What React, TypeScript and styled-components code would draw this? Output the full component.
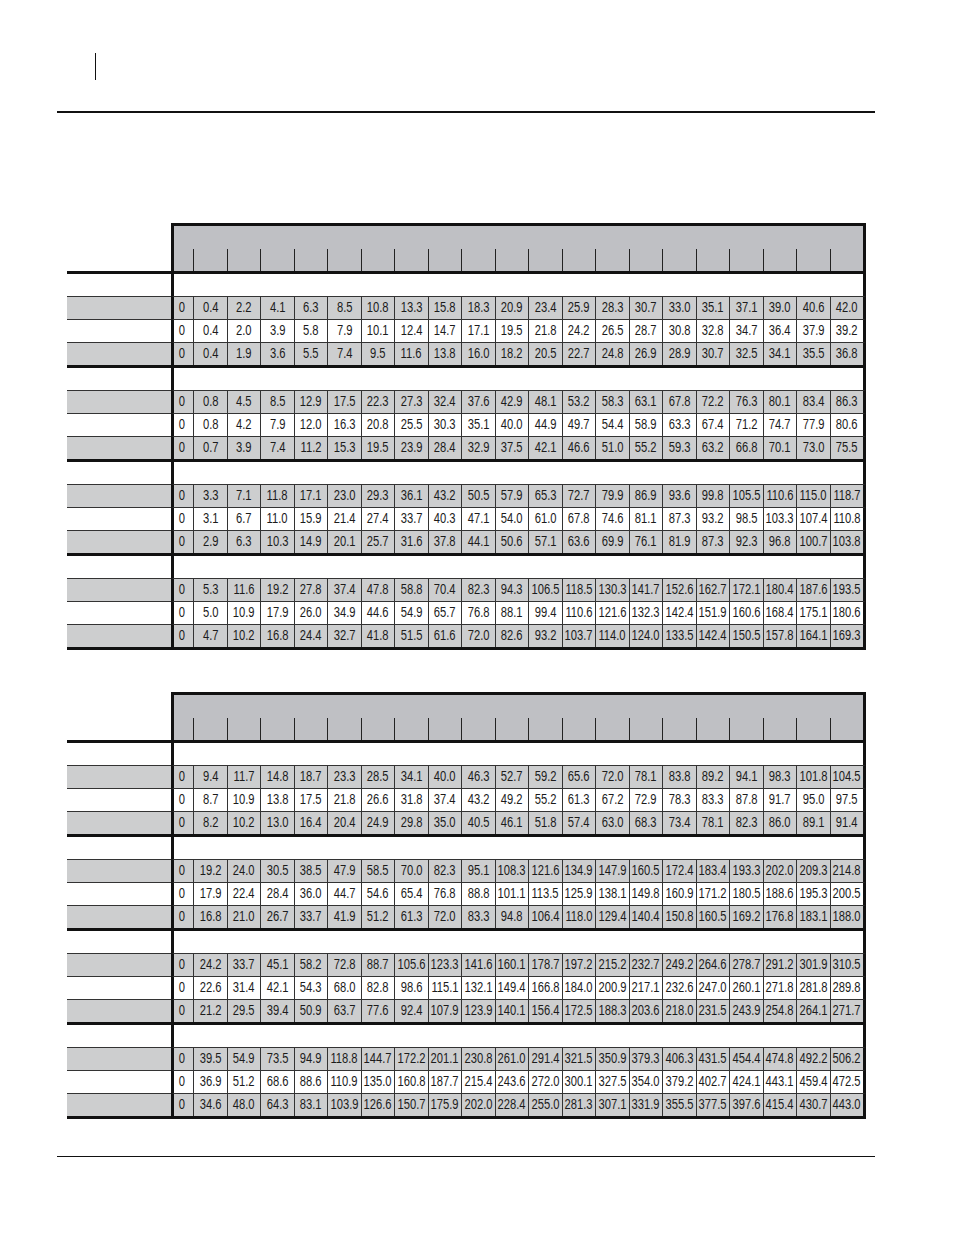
import React from "react";
import styled, { createGlobalStyle } from "styled-components";

type Tone = "gray" | "white";

const GlobalStyle = createGlobalStyle`
  html, body {
    margin: 0;
    padding: 0;
    background: #fff;
  }
  body {
    font-family: "Liberation Sans", Arial, sans-serif;
    color: #1b1b1b;
  }
`;

const Page = styled.div`
  width: 954px;
  height: 1235px;
  display: flex;
  flex-direction: column;
`;

const PageTop = styled.div`
  display: flex;
  flex-direction: column;
  padding-top: 53px;
`;

const Mark = styled.div`
  margin-left: 95px;
  width: 1px;
  height: 27px;
  background: #111;
`;

const Rule = styled.div<{ $thick?: boolean }>`
  margin-left: 57px;
  width: 818px;
  height: ${(p) => (p.$thick ? "2px" : "1px")};
  background: #111;
`;

const TopRule = styled(Rule)`
  margin-top: 31px;
`;

const BottomRule = styled(Rule)`
  margin-top: 37px;
`;

const Table = styled.div<{ $gap: number }>`
  display: flex;
  flex-direction: column;
  width: 799px;
  margin-left: 67px;
  margin-top: ${(p) => p.$gap}px;
`;

const HeadRow = styled.div`
  display: flex;
  height: 48px;
`;

const LabelGap = styled.div`
  width: 104px;
  flex: none;
`;

const HeadBox = styled.div`
  flex: 1;
  display: flex;
  flex-direction: column;
  justify-content: flex-end;
  background: #bfc0c4;
  border: 3px solid #111;
  border-bottom: none;
`;

const Ticks = styled.div`
  display: grid;
  grid-template-columns: 19px repeat(20, minmax(0, 1fr));
  height: 22px;
`;

const Tick = styled.div<{ $first?: boolean }>`
  border-left: ${(p) => (p.$first ? "none" : "1px solid #222")};
`;

const HeavyLine = styled.div`
  height: 3px;
  background: #111;
`;

const Row = styled.div<{ $blank?: boolean }>`
  display: flex;
  height: ${(p) => (p.$blank ? "22px" : "23px")};
`;

const Label = styled.div<{ $tone: Tone; $blank?: boolean }>`
  width: 104px;
  flex: none;
  box-sizing: border-box;
  background: ${(p) => (p.$tone === "gray" ? "#cdcecf" : "#fff")};
  border-top: ${(p) => (p.$blank ? "none" : "1px solid #333")};
`;

const Cells = styled.div<{ $tone: Tone; $blank?: boolean }>`
  flex: 1;
  min-width: 0;
  display: grid;
  grid-template-columns: 19px repeat(20, minmax(0, 1fr));
  box-sizing: border-box;
  background: ${(p) => (p.$tone === "gray" ? "#cdcecf" : "#fff")};
  border-left: 3px solid #111;
  border-right: 3px solid #111;
  border-top: ${(p) => (p.$blank ? "none" : "1px solid #333")};
`;

const Cell = styled.div<{ $first?: boolean }>`
  display: flex;
  align-items: center;
  justify-content: center;
  min-width: 0;
  box-sizing: border-box;
  padding-bottom: 2px;
  padding-right: ${(p) => (p.$first ? "3px" : "0")};
  border-left: ${(p) => (p.$first ? "none" : "1px solid #333")};
  font-size: 14px;
  line-height: 1;
  white-space: nowrap;
`;

const Num = styled.span`
  display: inline-block;
  transform: scaleX(0.8);
`;

const parse = (s: string) => s.trim().split(/\s+/);

const tableOne: string[][][] = [
  [
    "0 0.4 2.2 4.1 6.3 8.5 10.8 13.3 15.8 18.3 20.9 23.4 25.9 28.3 30.7 33.0 35.1 37.1 39.0 40.6 42.0",
    "0 0.4 2.0 3.9 5.8 7.9 10.1 12.4 14.7 17.1 19.5 21.8 24.2 26.5 28.7 30.8 32.8 34.7 36.4 37.9 39.2",
    "0 0.4 1.9 3.6 5.5 7.4 9.5 11.6 13.8 16.0 18.2 20.5 22.7 24.8 26.9 28.9 30.7 32.5 34.1 35.5 36.8",
  ],
  [
    "0 0.8 4.5 8.5 12.9 17.5 22.3 27.3 32.4 37.6 42.9 48.1 53.2 58.3 63.1 67.8 72.2 76.3 80.1 83.4 86.3",
    "0 0.8 4.2 7.9 12.0 16.3 20.8 25.5 30.3 35.1 40.0 44.9 49.7 54.4 58.9 63.3 67.4 71.2 74.7 77.9 80.6",
    "0 0.7 3.9 7.4 11.2 15.3 19.5 23.9 28.4 32.9 37.5 42.1 46.6 51.0 55.2 59.3 63.2 66.8 70.1 73.0 75.5",
  ],
  [
    "0 3.3 7.1 11.8 17.1 23.0 29.3 36.1 43.2 50.5 57.9 65.3 72.7 79.9 86.9 93.6 99.8 105.5 110.6 115.0 118.7",
    "0 3.1 6.7 11.0 15.9 21.4 27.4 33.7 40.3 47.1 54.0 61.0 67.8 74.6 81.1 87.3 93.2 98.5 103.3 107.4 110.8",
    "0 2.9 6.3 10.3 14.9 20.1 25.7 31.6 37.8 44.1 50.6 57.1 63.6 69.9 76.1 81.9 87.3 92.3 96.8 100.7 103.8",
  ],
  [
    "0 5.3 11.6 19.2 27.8 37.4 47.8 58.8 70.4 82.3 94.3 106.5 118.5 130.3 141.7 152.6 162.7 172.1 180.4 187.6 193.5",
    "0 5.0 10.9 17.9 26.0 34.9 44.6 54.9 65.7 76.8 88.1 99.4 110.6 121.6 132.3 142.4 151.9 160.6 168.4 175.1 180.6",
    "0 4.7 10.2 16.8 24.4 32.7 41.8 51.5 61.6 72.0 82.6 93.2 103.7 114.0 124.0 133.5 142.4 150.5 157.8 164.1 169.3",
  ],
].map((s) => s.map(parse));

const tableTwo: string[][][] = [
  [
    "0 9.4 11.7 14.8 18.7 23.3 28.5 34.1 40.0 46.3 52.7 59.2 65.6 72.0 78.1 83.8 89.2 94.1 98.3 101.8 104.5",
    "0 8.7 10.9 13.8 17.5 21.8 26.6 31.8 37.4 43.2 49.2 55.2 61.3 67.2 72.9 78.3 83.3 87.8 91.7 95.0 97.5",
    "0 8.2 10.2 13.0 16.4 20.4 24.9 29.8 35.0 40.5 46.1 51.8 57.4 63.0 68.3 73.4 78.1 82.3 86.0 89.1 91.4",
  ],
  [
    "0 19.2 24.0 30.5 38.5 47.9 58.5 70.0 82.3 95.1 108.3 121.6 134.9 147.9 160.5 172.4 183.4 193.3 202.0 209.3 214.8",
    "0 17.9 22.4 28.4 36.0 44.7 54.6 65.4 76.8 88.8 101.1 113.5 125.9 138.1 149.8 160.9 171.2 180.5 188.6 195.3 200.5",
    "0 16.8 21.0 26.7 33.7 41.9 51.2 61.3 72.0 83.3 94.8 106.4 118.0 129.4 140.4 150.8 160.5 169.2 176.8 183.1 188.0",
  ],
  [
    "0 24.2 33.7 45.1 58.2 72.8 88.7 105.6 123.3 141.6 160.1 178.7 197.2 215.2 232.7 249.2 264.6 278.7 291.2 301.9 310.5",
    "0 22.6 31.4 42.1 54.3 68.0 82.8 98.6 115.1 132.1 149.4 166.8 184.0 200.9 217.1 232.6 247.0 260.1 271.8 281.8 289.8",
    "0 21.2 29.5 39.4 50.9 63.7 77.6 92.4 107.9 123.9 140.1 156.4 172.5 188.3 203.6 218.0 231.5 243.9 254.8 264.1 271.7",
  ],
  [
    "0 39.5 54.9 73.5 94.9 118.8 144.7 172.2 201.1 230.8 261.0 291.4 321.5 350.9 379.3 406.3 431.5 454.4 474.8 492.2 506.2",
    "0 36.9 51.2 68.6 88.6 110.9 135.0 160.8 187.7 215.4 243.6 272.0 300.1 327.5 354.0 379.2 402.7 424.1 443.1 459.4 472.5",
    "0 34.6 48.0 64.3 83.1 103.9 126.6 150.7 175.9 202.0 228.4 255.0 281.3 307.1 331.9 355.5 377.5 397.6 415.4 430.7 443.0",
  ],
].map((s) => s.map(parse));

const tones: Tone[] = ["gray", "white", "gray"];

const DataRow: React.FC<{ values: string[]; tone: Tone }> = ({ values, tone }) => (
  <Row>
    <Label $tone={tone} />
    <Cells $tone={tone}>
      {values.map((v, i) => (
        <Cell key={i} $first={i === 0}>
          <Num>{v}</Num>
        </Cell>
      ))}
    </Cells>
  </Row>
);

const RateTable: React.FC<{ sections: string[][][]; gap: number }> = ({ sections, gap }) => (
  <Table $gap={gap}>
    <HeadRow>
      <LabelGap />
      <HeadBox>
        <Ticks>
          {Array.from({ length: 21 }).map((_, i) => (
            <Tick key={i} $first={i === 0} />
          ))}
        </Ticks>
      </HeadBox>
    </HeadRow>
    <HeavyLine />
    {sections.map((rows, s) => (
      <React.Fragment key={s}>
        <Row $blank>
          <Label $tone="white" $blank />
          <Cells $tone="white" $blank />
        </Row>
        {rows.map((values, r) => (
          <DataRow key={r} values={values} tone={tones[r]} />
        ))}
        <HeavyLine />
      </React.Fragment>
    ))}
  </Table>
);

export default function App() {
  return (
    <Page>
      <GlobalStyle />
      <PageTop>
        <Mark />
        <TopRule $thick />
      </PageTop>
      <RateTable sections={tableOne} gap={110} />
      <RateTable sections={tableTwo} gap={42} />
      <BottomRule />
    </Page>
  );
}
